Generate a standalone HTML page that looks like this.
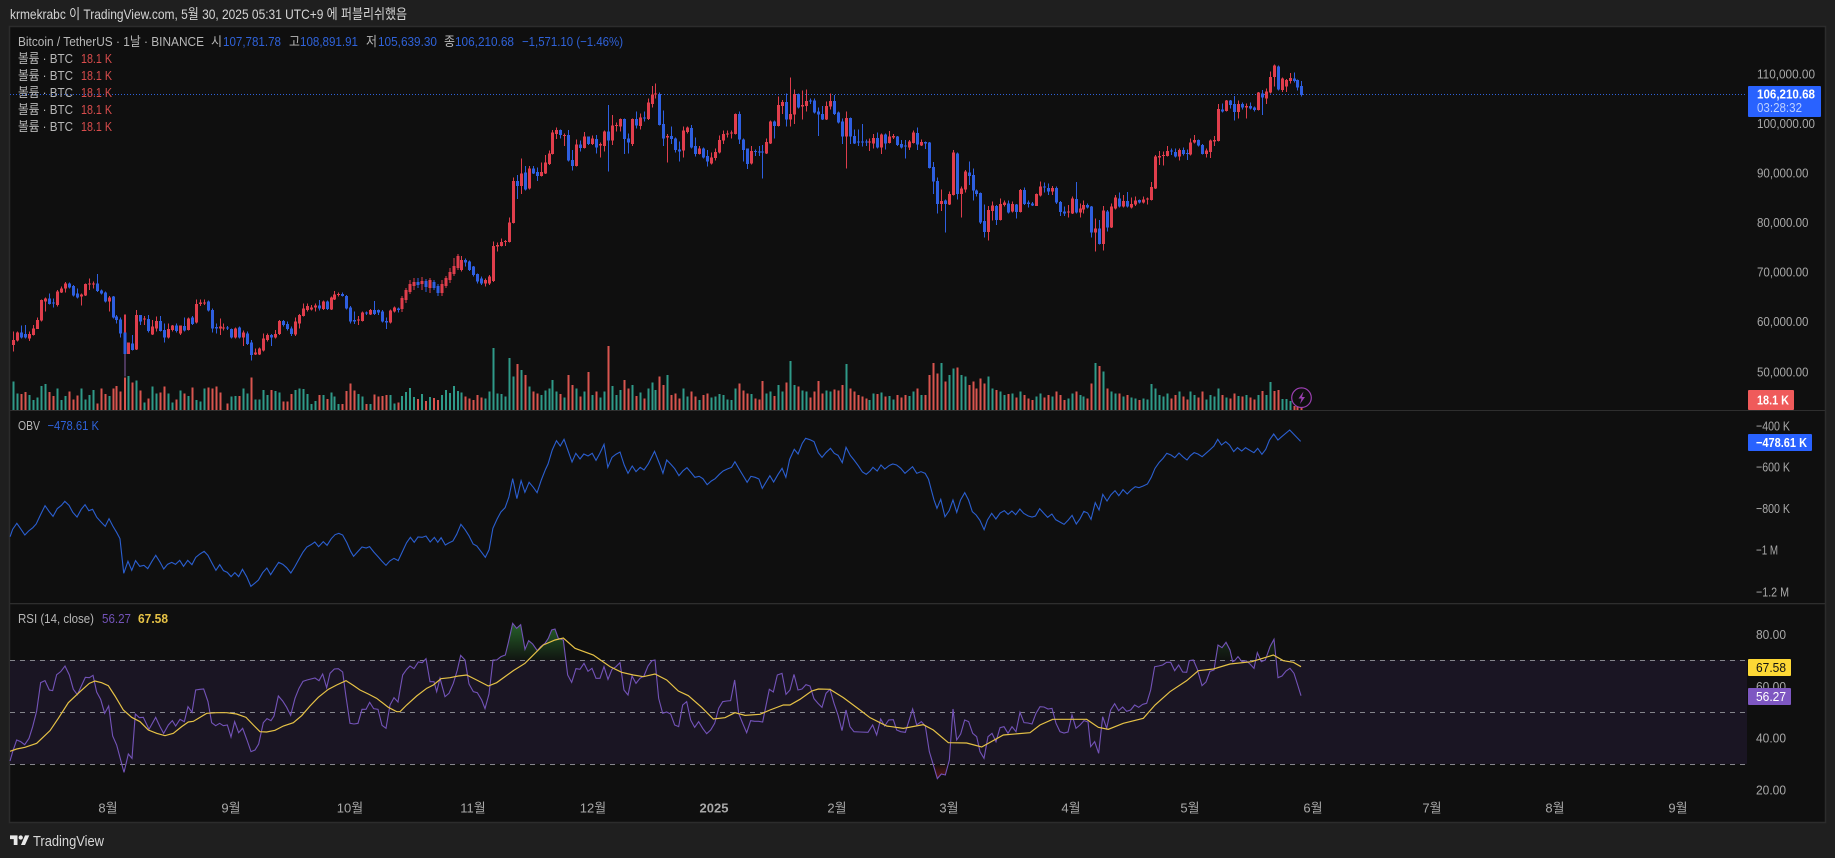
<!DOCTYPE html>
<html lang="ko"><head><meta charset="utf-8"><title>BTC chart</title>
<style>
html,body{margin:0;padding:0;background:#1f1f1f;width:1835px;height:858px;overflow:hidden}
svg{position:absolute;left:0;top:0;display:block}
text{font-family:"Liberation Sans","Noto Sans CJK KR",sans-serif;font-size:13px;fill:#b2b2b2}
.h{fill:#d4d4d4;font-size:14px}
.t{fill:#b8b8b8}
.b{fill:#2f62d9}
.r{fill:#d84c4c}
.a{fill:#a8a8a8}
.w{fill:#fff;font-weight:bold}
.vt{fill:none;stroke:#2f9a88;stroke-width:6}
.vr{fill:none;stroke:#d9554f;stroke-width:6}
.wr{fill:none;stroke:#de3d4c;stroke-width:3}
.wb{fill:none;stroke:#2e5fe0;stroke-width:3}
.br{fill:none;stroke:#e03e4c;stroke-width:9}
.bb{fill:none;stroke:#2e5fe0;stroke-width:9}
.nl{fill:none;vector-effect:non-scaling-stroke}
</style></head><body>
<svg width="1835" height="858" viewBox="0 0 1835 858" xmlns="http://www.w3.org/2000/svg">
<defs>
<linearGradient id="gg" gradientUnits="userSpaceOnUse" x1="0" y1="40" x2="0" y2="150"><stop offset="0" stop-color="#2e7d32" stop-opacity=".75"/><stop offset="1" stop-color="#2e7d32" stop-opacity=".05"/></linearGradient>
<linearGradient id="gr" gradientUnits="userSpaceOnUse" x1="0" y1="464" x2="0" y2="506"><stop offset="0" stop-color="#b71c1c" stop-opacity=".05"/><stop offset="1" stop-color="#b71c1c" stop-opacity=".5"/></linearGradient>
</defs>
<rect x="0" y="0" width="1835" height="858" fill="#1f1f1f"/>
<rect x="9.5" y="26.5" width="1816" height="796" fill="#0f0f0f" stroke="#2c2c2c" stroke-width="1.5"/>
<rect x="10" y="410" width="1815" height="1" fill="#2e2e2e"/>
<rect x="10" y="603" width="1815" height="1.3" fill="#2e2e2e"/>
<rect x="10" y="660" width="1737" height="104" fill="#1a1523"/>
<g stroke="#85858c" stroke-width="1" stroke-dasharray="5 5" fill="none"><path d="M10 660.5H1747"/><path d="M10 712.5H1747"/><path d="M10 764.5H1747"/></g>
<path d="M10 94.5H1747" stroke="#2f62d9" stroke-width="1" stroke-dasharray="1 2" fill="none"/>

<!-- volume -->
<g shape-rendering="crispEdges">
<g transform="translate(0,260) scale(.33333)">
<path class="vt" d="M40 450V365M52 450V400M88 450V405M100 450V420M112 450V412M124 450V378M136 450V372M172 450V385M184 450V420M196 450V408M244 450V385M256 450V418M268 450V405M280 450V390M328 450V408M386 450V348M410 450V362M433 450V428M457 450V380M469 450V400M505 450V400M517 450V428M541 450V392M565 450V408M589 450V420M601 450V425M613 450V385M695 450V410M707 450V408M731 450V385M743 450V400M767 450V418M779 450V418M791 450V390M803 450V405M827 450V393M838 450V397M886 450V390M898 450V385M910 450V387M922 450V402M934 450V432M946 450V423M970 450V405M994 450V397M1004 450V410M1016 450V432M1075 450V402M1087 450V410M1111 450V432M1171 450V405M1183 450V430"/>
<path class="vr" d="M64 450V402M76 450V396M148 450V396M160 450V408M208 450V394M220 450V418M232 450V406M292 450V430M304 450V385M316 450V402M340 450V385M350 450V378M362 450V395M375 450V352M398 450V368M421 450V392M445 450V415M481 450V397M493 450V380M529 450V418M553 450V400M577 450V382M625 450V382M637 450V385M649 450V380M661 450V398M683 450V430M719 450V408M755 450V352M815 450V390M850 450V425M862 450V425M874 450V402M958 450V405M982 450V417M1027 450V432M1039 450V393M1051 450V370M1063 450V392M1099 450V432M1123 450V403M1135 450V410M1147 450V408M1159 450V405M1195 450V427"/>
</g>
<g>
<path fill="none" stroke="#2f9a88" stroke-width="2" d="M402 410V396M406 410V392M410 410V388M414 410V397M422 410V394M430 410V397M442 410V395M446 410V390M450 410V393M454 410V386M458 410V391"/>
<path fill="none" stroke="#d9554f" stroke-width="2" d="M418 410V399M426 410V401M434 410V398M438 410V400"/>
</g>
<g transform="translate(460,260) scale(.33333)">
<path class="vt" d="M4 450V398M76 450V415M88 450V395M100 450V264M112 450V400M124 450V402M136 450V410M148 450V294M160 450V350M184 450V330M208 450V380M244 450V405M256 450V392M268 450V385M278 450V360M290 450V395M314 450V412M350 450V385M374 450V395M398 450V405M422 450V412M434 450V395M458 450V378M470 450V405M482 450V390M518 450V375M542 450V398M566 450V385M578 450V368M586 450V390M622 450V345M670 450V385M682 450V410M718 450V420M754 450V412M766 450V410M778 450V402M790 450V405M802 450V418M814 450V420M826 450V385M874 450V402M920 450V400M932 450V395M956 450V375M968 450V395M992 450V303M1004 450V375M1028 450V392M1040 450V395M1100 450V392M1112 450V395M1160 450V312"/>
<path class="vr" d="M16 450V410M28 450V415M40 450V420M52 450V405M64 450V412M172 450V312M196 450V345M220 450V395M232 450V400M302 450V402M326 450V345M338 450V375M362 450V410M386 450V336M410 450V395M446 450V258M494 450V360M506 450V385M530 450V408M554 450V415M598 450V350M610 450V375M634 450V405M646 450V400M658 450V415M694 450V395M706 450V410M730 450V405M742 450V400M838 450V370M850 450V392M862 450V400M886 450V415M898 450V418M908 450V363M944 450V408M980 450V368M1016 450V380M1052 450V412M1064 450V395M1076 450V363M1088 450V400M1124 450V388M1136 450V392M1148 450V375M1172 450V385M1184 450V395M1196 450V405"/>
</g>
<g transform="translate(860,260) scale(.33333)">
<path class="vt" d="M28 450V420M40 450V400M64 450V398M88 450V408M100 450V418M148 450V408M160 450V395M184 450V405M244 450V309M268 450V345M280 450V325M304 450V345M316 450V350M386 450V350M398 450V385M422 450V395M434 450V405M458 450V400M482 450V395M530 450V410M542 450V400M578 450V410M626 450V415M638 450V400M662 450V405M671 450V410M707 450V309M731 450V335M755 450V395M767 450V400M791 450V410M815 450V412M827 450V415M851 450V415M863 450V418M875 450V372M887 450V385M899 450V405M911 450V410M923 450V400M959 450V395M991 450V395M1003 450V405M1039 450V418M1051 450V405M1063 450V410M1075 450V385M1099 450V412M1135 450V408M1159 450V405M1195 450V405M1219 450V405M1231 450V366M1267 450V417M1279 450V417M1291 450V423"/>
<path class="vr" d="M8 450V410M19 450V415M52 450V402M76 450V410M112 450V405M124 450V412M136 450V405M172 450V385M196 450V405M208 450V345M220 450V309M232 450V340M256 450V365M292 450V322M328 450V375M340 450V365M350 450V385M362 450V355M374 450V370M410 450V390M446 450V402M470 450V412M494 450V405M506 450V415M518 450V420M554 450V412M566 450V405M590 450V395M602 450V405M614 450V420M650 450V395M683 450V415M695 450V370M719 450V318M743 450V385M779 450V400M803 450V405M839 450V420M935 450V415M947 450V405M971 450V410M983 450V418M1015 450V412M1027 450V395M1087 450V405M1111 450V415M1123 450V400M1147 450V410M1171 450V412M1183 450V418M1207 450V393M1243 450V393M1255 450V390M1303 450V438M1313 450V440M1325 450V442"/>
</g>
</g>

<!-- candles -->
<g shape-rendering="crispEdges">
<g transform="translate(0,260) scale(.33333)">
<path class="wr" d="M40 215V275M52 215V245M88 215V243M100 195V227M112 172V207M124 118V184M136 112V155M172 90V140M184 80V99M196 66V98M244 100V137M256 70V108M268 55V90M280 65V85M328 108V155M386 248V282M410 150V270M433 168V195M457 180V225M469 170V215M505 190V235M517 195V215M541 197V225M565 172V212M589 118V190M601 118V138M613 118V135M661 175V225M671 190V212M707 203V235M731 212V258M766 265V285M778 263V285M790 220V275M802 220V245M826 210V235M838 180V225M886 172V228M898 162V205M910 130V170M922 130V155M934 135V152M946 130V155M970 122V150M994 110V150M1004 93V120M1016 98V110M1075 168V195M1087 155V185M1111 147V165M1171 148V190M1183 140V158"/>
<path class="wb" d="M64 197V235M76 195V235M148 100V134M160 115V143M208 68V85M220 75V110M232 85V115M292 42V96M304 88V103M316 95V127M340 108V175M350 165V190M362 172V232M398 225V272M421 165V195M445 165V217M481 168V215M493 190V248M529 190V218M553 172V215M577 168V195M625 122V155M637 145V218M649 190V220M683 198V210M695 205V235M719 200V235M743 215V255M754 240V302M814 222V258M850 180V200M862 185V212M874 200V228M958 120V152M982 122V150M1027 98V110M1039 105V148M1051 138V190M1063 155V192M1099 155V165M1123 123V165M1135 148V165M1147 150V188M1159 172V207M1195 142V158"/>
<path class="br" d="M40 240V255M52 218V242M88 222V235M100 205V225M112 180V207M124 120V182M136 115V125M172 95V135M184 85V97M196 70V85M244 103V110M256 72V107M268 71V74M280 70V73M328 112V125M386 248V282M410 165V268M433 175V178M457 200V223M469 183V205M505 207V232M517 197V210M541 197V220M565 175V210M589 132V188M601 128V132M613 127V130M661 200V206M671 203V206M707 205V233M731 218V232M766 278V283M778 265V283M790 235V272M802 225V240M826 222V233M838 183V222M886 185V224M898 165V190M910 145V168M922 138V150M934 142V148M946 137V143M970 125V147M994 113V148M1004 103V118M1016 102V105M1075 178V182M1087 157V183M1111 150V163M1171 152V188M1183 143V155"/>
<path class="bb" d="M64 218V232M76 222V232M148 115V132M160 128V131M208 70V82M220 78V106M232 100V113M292 70V93M304 92V100M316 98V125M340 110V172M350 170V180M362 178V220M375 218V282M398 250V270M421 165V185M445 177V213M481 183V213M493 210V233M529 197V213M553 198V212M577 172V192M625 125V152M637 150V205M649 201V205M683 203V206M695 207V233M719 203V232M743 220V252M754 248V285M814 225V233M850 183V195M862 192V207M874 205V222M958 137V146M982 125V147M1027 102V108M1039 108V145M1051 142V185M1063 180V185M1099 157V160M1123 150V162M1135 150V158M1147 155V185M1159 183V187M1195 145V150"/>
<path d="M375 163V218" fill="none" stroke="#de3d4c" stroke-width="6"/>
<path d="M375 282V350" fill="none" stroke="#8a5fa8" stroke-width="4"/>
</g>
<g>
<path fill="none" stroke="#de3d4c" stroke-width="1" d="M402 296V312M406 288V303M410 280V294M414 278V290M422 277V290M430 278V293M442 280V296M446 276V288M450 268V283M454 258V276M458 254V270"/>
<path fill="none" stroke="#2e5fe0" stroke-width="1" d="M418 278V288M426 279V292M434 280V290M438 284V296"/>
<path fill="none" stroke="#e03e4c" stroke-width="3" d="M402 298V309M406 290V300M410 284V292M414 282V286M422 281V284M430 280V288M442 284V293M446 278V286M450 272V280M454 266V274M458 256V268"/>
<path fill="none" stroke="#2e5fe0" stroke-width="3" d="M418 282V285M426 281V287M434 282V288M438 286V293"/>
</g>
<g transform="translate(460,70) scale(.33333)">
<path class="wr" d="M4 558V605M76 625V650M88 615V645M100 515V636M112 518V545M124 505V530M136 510V528M148 442V518M160 322V460M184 265V372M208 288V358M244 278V320M256 255V312M268 242V285M278 180V254M290 172V207M314 190V228M350 208V290M374 186V236M398 196V225M422 218V262M434 182V245M458 135V225M470 158V185M482 145V185M518 145V228M542 130V178M566 85V150M578 48V112M586 40V85M622 192V278M670 170V262M682 170V190M718 228V254M754 248V283M766 235V272M778 197V250M790 182V222M802 182V202M814 182V205M826 130V194M874 228V283M920 205V252M932 152V222M956 80V170M968 90V132M992 22V170M1004 58V162M1028 62V148M1040 58V124M1100 95V150M1112 70V118M1160 125V295"/>
<path class="wb" d="M16 565V590M28 572V603M40 588V620M52 610V640M64 620V645M172 315V387M196 288V362M220 288V312M232 292V333M302 178V205M326 180V275M338 240V302M362 212V245M386 200V225M410 195V250M446 105V305M494 145V252M506 190V250M530 125V175M554 125V155M598 68V167M610 122V228M634 170V222M646 203V248M658 215V275M694 165V235M706 202V260M730 232V265M742 240V290M838 125V222M850 205V275M862 235V297M886 238V258M898 228V258M908 225V325M944 152V205M980 70V170M1016 70V115M1052 85V102M1064 85V130M1076 112V198M1088 108V150M1124 75V135M1136 125V160M1148 145V222M1172 142V222M1184 178V222M1196 178V228"/>
<path class="br" d="M4 570V600M76 630V640M88 620V640M100 528V633M112 525V530M124 516V528M136 513V516M148 457V516M160 333V459M184 310V348M208 296V356M244 306V318M256 278V310M268 250V282M278 188V252M290 180V192M314 195V198M350 224V288M374 200V234M398 206V222M422 222V226M434 185V228M458 167V212M470 165V168M482 147V170M518 147V222M542 143V168M566 98V147M578 73V102M586 71V74M622 198V203M670 182V242M682 172V186M718 235V252M754 262V280M766 246V264M778 210V248M790 192V212M802 190V194M814 187V190M826 132V192M874 243V280M920 216V250M932 155V220M956 105V168M968 96V108M992 132V148M1004 72V133M1028 105V110M1040 93V108M1100 108V148M1112 93V110M1160 144V200"/>
<path class="bb" d="M16 570V578M28 575V600M40 590V615M52 612V635M64 625V640M172 333V348M196 308V358M220 296V310M232 306V318M302 180V195M326 195V272M338 270V288M362 224V234M386 200V222M410 207V232M446 185V212M494 147V207M506 205V218M530 147V167M554 143V146M598 72V165M610 162V205M634 198V207M646 205V240M658 238V244M694 174V232M706 228V252M730 235V262M742 258V275M838 132V208M850 209V240M862 236V282M886 243V246M898 245V248M908 245V248M944 155V168M980 96V148M1016 72V112M1052 91V94M1064 92V128M1076 125V134M1088 132V148M1124 93V132M1136 128V158M1148 155V200M1172 144V200M1184 198V220M1196 215V218"/>
</g>
<g transform="translate(860,70) scale(.33333)">
<path class="wr" d="M28 205V243M40 192V235M64 190V252M88 183V220M100 192V207M148 210V240M160 182V220M184 208V228M244 358V423M268 365V405M280 240V377M304 350V442M316 300V368M386 408V512M398 395V452M422 385V452M434 392V410M458 394V428M482 357V428M530 370V408M542 335V380M578 348V375M626 405V442M638 380V432M662 400V442M671 392V430M707 445V545M731 408V542M755 400V474M767 375V418M791 375V412M815 383V415M827 380V408M851 380V400M863 382V403M875 336V392M887 255V357M899 243V285M911 245V287M923 228V260M959 235V272M991 205V256M1003 195V220M1039 235V262M1051 208V264M1063 198V228M1075 102V215M1099 90V125M1135 92V145M1159 100V145M1195 66V122M1219 55V102M1231 5V70M1243 -16V50M1267 22V66M1279 27V66M1291 9V40"/>
<path class="wb" d="M8 162V230M19 208V228M52 187V235M76 190V238M112 198V228M124 210V235M136 210V265M172 172V240M196 215V237M208 216V295M220 276V372M232 322V430M256 388V488M292 248V388M328 274V345M340 295V392M350 358V380M362 367V462M374 403V502M410 405V465M446 392V430M470 402V445M494 352V405M506 392V412M518 396V408M554 337V368M566 340V375M590 350V402M602 393V438M614 410V438M650 336V430M683 400V416M695 408V502M719 450V524M743 420V485M779 368V413M803 366V412M839 388V400M935 235V255M947 235V262M971 232V256M983 238V270M1015 208V229M1027 222V254M1087 100V127M1111 90V115M1123 78V152M1147 98V118M1171 98V118M1183 110V125M1207 60V135M1255 -13V62M1303 8V38M1313 28V62M1325 33V80"/>
<path class="br" d="M28 214V218M40 204V220M64 194V232M88 200V219M100 198V203M148 215V232M160 187V219M184 216V226M244 393V402M268 372V404M280 248V375M304 355V372M316 305V358M386 420V486M398 407V423M422 402V450M434 398V405M458 402V425M482 360V426M530 372V408M542 350V376M578 354V364M626 425V428M638 385V430M662 416V428M671 405V418M707 475V488M731 422V522M755 410V472M767 383V415M791 393V410M815 402V412M827 392V404M851 388V398M863 385V388M875 351V390M887 260V355M899 258V263M911 255V258M923 243V258M959 240V260M991 217V254M1003 210V218M1039 242V252M1051 212V246M1063 210V214M1075 117V213M1099 92V123M1135 102V126M1159 108V112M1195 68V120M1219 64V85M1231 21V68M1243 -13V21M1267 26V60M1279 30V50M1291 24V33"/>
<path class="bb" d="M8 215V218M19 215V218M52 204V232M76 194V220M112 200V225M124 222V232M136 227V230M172 189V224M196 216V220M208 218V294M220 291V335M232 333V402M256 392V402M292 250V372M328 307V318M340 315V362M350 362V372M362 369V458M374 453V486M410 408V450M446 400V428M470 403V426M494 360V402M506 398V402M518 400V407M554 349V352M566 354V364M590 354V398M602 396V426M614 424V430M650 387V428M683 405V412M695 410V488M719 475V522M743 424V472M779 385V410M803 393V410M839 390V398M935 242V245M947 246V260M971 240V252M983 249V252M1015 210V227M1027 225V252M1087 118V124M1111 92V105M1123 102V126M1147 102V112M1171 108V116M1183 113V120M1207 70V83M1255 -10V58M1303 25V33M1313 30V52M1325 48V75"/>
</g>
</g>

<!-- OBV -->
<g stroke="#2b5fd0" stroke-width="1.1">
<polyline class="nl" transform="translate(0,420) scale(.42092,.33333)" points="24,350 30,328 40,310 50,328 59,345 68,333 78,323 86,312 96,285 107,257 117,275 126,289 136,266 146,256 154,244 164,256 173,277 183,291 193,268 202,254 211,272 220,268 230,292 240,306 250,319 259,296 268,318 277,337 285,356 294,460 304,424 313,451 322,422 332,439 342,436 351,446 361,424 370,406 380,426 389,447 398,433 408,427 417,433 427,421 436,439 446,421 456,434 465,412 475,402 485,394 494,406 504,430 513,451 522,434 531,452 540,457 549,470 558,458 567,470 576,448 586,470 596,499 605,490 614,480 624,458 634,444 643,464 652,446 662,427 672,433 681,443 691,459 700,441 710,418 720,396 729,381 739,374 748,366 757,380 768,365 777,376 787,356 796,344 805,340 814,345 824,368 833,394 840,409 850,395 860,381 870,384 878,380 888,396 898,410 907,423 917,436 926,423 936,415 946,422 956,395 966,368 975,352 984,367 993,351 1003,352 1012,348 1022,366 1032,352 1040,367 1048,353 1058,375 1066,369 1076,363 1085,343 1095,313 1105,329 1114,347 1124,372 1133,378 1143,395 1153,412 1162,389 1171,325 1181,297 1190,276 1200,263 1209,231 1218,176 1228,236 1238,182 1247,217 1257,187 1267,202 1276,218 1286,180 1296,148 1302,132 1312,90 1322,62 1331,78 1340,58 1350,94 1359,126 1368,100 1378,117 1387,102 1397,108 1407,100 1416,121 1425,100 1435,73 1444,142 1454,112 1463,103 1473,96 1483,135 1492,160 1502,138 1511,155 1521,142 1530,150 1540,132 1555,94 1568,135"/>
<polyline class="nl" transform="translate(660,420) scale(.42092,.33333)" points="0,135 7,160 16,120 26,133 35,146 45,167 55,152 64,143 74,158 83,172 93,169 102,176 112,194 122,183 131,176 141,163 150,153 160,147 170,142 178,125 188,147 198,168 207,187 216,169 226,172 235,177 243,205 252,186 261,167 270,186 280,164 290,145 299,172 308,118 319,88 328,102 338,70 346,55 356,59 366,65 376,98 385,112 394,98 405,85 414,100 423,106 433,128 442,82 452,106 461,120 471,137 481,156 490,163 499,153 506,142 516,153 525,135 534,147 544,137 553,132 562,135 572,145 582,160 591,150 600,140 610,160 620,155 630,160 638,178 645,212 651,240 658,265 667,238 677,290 687,272 696,240 705,277 714,240 724,218 733,240 742,275 751,285 760,301 770,329 778,300 788,280 798,297 808,279 818,272 827,283 836,273 845,284 855,267 864,280 875,288 884,291 892,288 902,266 912,280 921,292 931,282 940,299 950,306 960,313 970,300 979,286 989,312 998,296 1007,274 1016,279 1024,298 1034,248 1043,270 1052,223 1062,243 1071,225 1081,212 1090,227 1100,209 1110,222 1119,210 1129,200 1138,203 1148,198 1158,192 1167,172 1176,145 1186,127 1195,115 1204,100 1214,105 1223,113 1233,99 1242,110 1252,120 1260,107 1269,98 1278,102 1288,110 1297,100 1306,90 1316,78 1325,58 1334,75 1344,65 1353,75 1363,95 1372,83 1382,93 1391,83 1400,90 1411,98 1420,85 1430,103 1439,88 1448,60 1458,42 1468,60 1477,50 1496,30 1522,64"/>
</g>

<!-- RSI fills -->
<g transform="translate(400,610) scale(.33333)"><polygon fill="url(#gg)" points="279,150 290,150 303,140 316,135 325,98 338,40 350,55 362,44 375,118 386,92 398,102 412,122 422,110 435,100 445,85 455,60 465,57 475,85 490,90 497,150"/></g>
<g transform="translate(860,610) scale(.33333)"><polygon fill="url(#gg)" opacity=".6" points="1065,150 1074,105 1086,113 1098,97 1110,120 1116,150"/><polygon fill="url(#gg)" opacity=".6" points="1218,150 1230,110 1242,88 1246,150"/><polygon fill="url(#gr)" points="220,464 232,506 244,492 256,495 264,464"/></g>

<!-- RSI -->
<g stroke="#7353b8" stroke-width="1.1">
<polyline class="nl" transform="translate(0,600) scale(.33333)" points="30,483 38,455 50,420 62,425 74,434 87,415 98,380 110,333 122,248 135,242 148,270 158,272 170,224 182,215 195,198 208,225 220,268 232,284 244,258 256,232 268,233 279,226 290,276 302,298 314,340 326,318 338,408 350,435 362,480 372,517 385,462 396,475 406,342 418,353 430,352 447,388 467,352 480,380 491,400 505,375 517,362 527,378 540,358 553,365 564,320 576,337 587,270 600,268 611,267 624,305 635,368 647,377 659,370 670,377 682,375 693,411 704,365 716,398 728,385 741,420 753,455 765,450 776,432 790,368 801,356 813,362 822,348 835,288 848,303 860,322 872,346 885,295 897,265 909,244 921,240 945,234 957,242 968,222 980,263 990,220 1003,207 1015,206 1028,216 1038,290 1050,370 1062,372 1074,370 1086,328 1098,328 1109,307 1121,326 1134,328 1146,376 1158,385 1170,315 1182,293 1194,306 1200,270"/>
<polyline class="nl" transform="translate(400,610) scale(.33333)" points="0,240 8,195 20,178 30,168 42,176 55,156 67,158 78,146 90,215 102,215 110,245 120,205 135,260 147,250 160,220 172,180 182,136 195,150 207,222 220,245 232,248 245,270 255,296 267,252 279,150 290,150 303,140 316,135 325,98 338,40 350,55 362,44 375,118 386,92 398,102 412,122 422,110 435,100 445,85 455,60 465,57 475,85 490,90 503,195 515,217 528,176 540,178 552,160 564,184 576,175 588,205 600,205 612,170 624,208 636,178 648,170 660,158 672,240 684,255 696,198 708,220 720,205 732,198 744,168 756,152 765,150 776,265 788,310 800,306 812,312 824,345 836,350 848,285 860,275 872,330 884,352 896,335 908,355 920,371 932,360 944,340 956,295 968,275 980,273 992,272 1004,210 1016,310 1028,340 1040,368 1052,332 1064,334 1076,334 1088,336 1108,238 1120,246 1132,195 1146,190 1158,253 1170,240 1182,193 1194,240 1206,237 1218,224 1230,228 1242,266 1254,280 1266,292 1278,250 1290,238 1302,280 1314,315 1326,362 1338,300 1350,350 1362,365 1380,366"/>
<polyline class="nl" transform="translate(860,610) scale(.33333)" points="0,366 24,367 38,345 50,375 62,327 74,348 86,330 100,329 110,360 122,365 136,367 158,297 170,345 184,335 196,348 208,425 220,465 232,506 244,492 256,495 268,450 279,297 290,390 302,372 314,330 326,335 338,370 350,380 360,425 372,445 384,380 396,370 408,395 420,353 432,350 444,370 456,350 468,365 480,307 492,338 504,339 516,342 528,310 540,290 552,291 564,297 576,295 588,340 600,365 612,369 624,366 636,315 648,355 660,345 672,332 684,336 692,410 704,395 716,430 728,320 740,355 752,300 764,281 776,302 788,291 800,304 812,300 824,285 836,292 848,283 860,280 872,240 884,170 896,168 908,165 920,157 932,157 944,182 956,165 968,186 980,187 988,152 1000,150 1012,178 1026,227 1038,216 1050,184 1062,180 1074,105 1086,113 1098,97 1110,120 1118,155 1124,152 1134,140 1146,155 1158,152 1170,162 1182,175 1192,128 1204,155 1216,150 1230,110 1242,88 1254,203 1266,198 1278,183 1290,175 1302,190 1314,228 1323,257"/>
</g>
<!-- MA -->
<g stroke="#e6c246" stroke-width="1.2">
<polyline class="nl" transform="translate(0,600) scale(.33333)" points="30,454 50,447 75,442 110,430 150,392 175,355 205,308 240,275 268,250 285,243 305,248 325,257 345,288 370,330 395,352 420,365 445,390 470,400 495,407 520,400 545,380 565,366 580,364 600,352 620,340 650,338 680,338 710,342 738,352 760,375 780,395 800,396 825,391 850,378 880,368 905,347 930,318 955,292 985,268 1010,255 1038,242 1060,256 1080,270 1105,282 1130,295 1165,322 1190,335 1200,335"/>
<polyline class="nl" transform="translate(400,610) scale(.33333)" points="0,305 20,285 50,258 80,235 100,225 123,206 150,203 175,198 200,195 230,210 265,228 290,218 340,182 375,160 430,105 465,90 490,84 525,115 580,135 630,170 665,187 700,195 730,200 765,192 800,210 835,243 865,257 905,292 940,327 975,323 1005,308 1035,316 1080,313 1110,300 1150,285 1170,285 1200,268 1235,243 1255,237 1290,238 1330,263 1380,300"/>
<polyline class="nl" transform="translate(860,610) scale(.33333)" points="0,300 30,323 80,348 130,355 190,344 220,360 265,398 320,399 365,411 430,375 510,368 540,345 578,328 680,328 715,352 745,358 790,340 850,325 885,285 930,245 980,212 1015,182 1060,177 1110,162 1175,155 1240,135 1270,152 1300,157 1323,170"/>
</g>

<text class="h" x="10" y="19" textLength="397" lengthAdjust="spacingAndGlyphs">krmekrabc 이 TradingView.com, 5월 30, 2025 05:31 UTC+9 에 퍼블리쉬했음</text>
<text class="t" x="18" y="46" textLength="186" lengthAdjust="spacingAndGlyphs">Bitcoin / TetherUS · 1날 · BINANCE</text>
<text class="t" x="211" y="46" textLength="11" lengthAdjust="spacingAndGlyphs">시</text>
<text class="b" x="223" y="46" textLength="58" lengthAdjust="spacingAndGlyphs">107,781.78</text>
<text class="t" x="289" y="46" textLength="11" lengthAdjust="spacingAndGlyphs">고</text>
<text class="b" x="300" y="46" textLength="58" lengthAdjust="spacingAndGlyphs">108,891.91</text>
<text class="t" x="366" y="46" textLength="11" lengthAdjust="spacingAndGlyphs">저</text>
<text class="b" x="378" y="46" textLength="59" lengthAdjust="spacingAndGlyphs">105,639.30</text>
<text class="t" x="444" y="46" textLength="11" lengthAdjust="spacingAndGlyphs">종</text>
<text class="b" x="455" y="46" textLength="59" lengthAdjust="spacingAndGlyphs">106,210.68</text>
<text class="b" x="522" y="46" textLength="101" lengthAdjust="spacingAndGlyphs">−1,571.10 (−1.46%)</text>
<text class="t" x="18" y="63" textLength="55" lengthAdjust="spacingAndGlyphs">볼륨 · BTC</text><text class="r" x="81" y="63" textLength="31" lengthAdjust="spacingAndGlyphs">18.1 K</text>
<text class="t" x="18" y="80" textLength="55" lengthAdjust="spacingAndGlyphs">볼륨 · BTC</text><text class="r" x="81" y="80" textLength="31" lengthAdjust="spacingAndGlyphs">18.1 K</text>
<text class="t" x="18" y="97" textLength="55" lengthAdjust="spacingAndGlyphs">볼륨 · BTC</text><text class="r" x="81" y="97" textLength="31" lengthAdjust="spacingAndGlyphs">18.1 K</text>
<text class="t" x="18" y="114" textLength="55" lengthAdjust="spacingAndGlyphs">볼륨 · BTC</text><text class="r" x="81" y="114" textLength="31" lengthAdjust="spacingAndGlyphs">18.1 K</text>
<text class="t" x="18" y="131" textLength="55" lengthAdjust="spacingAndGlyphs">볼륨 · BTC</text><text class="r" x="81" y="131" textLength="31" lengthAdjust="spacingAndGlyphs">18.1 K</text>
<text class="t" x="18" y="430" textLength="22" lengthAdjust="spacingAndGlyphs">OBV</text><text class="b" x="47.5" y="430" textLength="51.5" lengthAdjust="spacingAndGlyphs">−478.61 K</text>
<text class="t" x="18" y="623" textLength="76" lengthAdjust="spacingAndGlyphs">RSI (14, close)</text>
<text x="102" y="623" textLength="29" lengthAdjust="spacingAndGlyphs" style="fill:#7353b8">56.27</text>
<text x="138" y="623" textLength="30" lengthAdjust="spacingAndGlyphs" style="fill:#e6c246;font-weight:bold">67.58</text>
<g>
<text class="a" x="1757" y="78.5" textLength="58" lengthAdjust="spacingAndGlyphs">110,000.00</text>
<text class="a" x="1757" y="128" textLength="58" lengthAdjust="spacingAndGlyphs">100,000.00</text>
<text class="a" x="1757" y="177.5" textLength="51.5" lengthAdjust="spacingAndGlyphs">90,000.00</text>
<text class="a" x="1757" y="227" textLength="51.5" lengthAdjust="spacingAndGlyphs">80,000.00</text>
<text class="a" x="1757" y="276.5" textLength="51.5" lengthAdjust="spacingAndGlyphs">70,000.00</text>
<text class="a" x="1757" y="326" textLength="51.5" lengthAdjust="spacingAndGlyphs">60,000.00</text>
<text class="a" x="1757" y="376.5" textLength="51.5" lengthAdjust="spacingAndGlyphs">50,000.00</text>
<text class="a" x="1756" y="430.5" textLength="34" lengthAdjust="spacingAndGlyphs">−400 K</text>
<text class="a" x="1756" y="471.5" textLength="34" lengthAdjust="spacingAndGlyphs">−600 K</text>
<text class="a" x="1756" y="513" textLength="34" lengthAdjust="spacingAndGlyphs">−800 K</text>
<text class="a" x="1756" y="554.5" textLength="22" lengthAdjust="spacingAndGlyphs">−1 M</text>
<text class="a" x="1756" y="596.5" textLength="33" lengthAdjust="spacingAndGlyphs">−1.2 M</text>
<text class="a" x="1756" y="639" textLength="30" lengthAdjust="spacingAndGlyphs">80.00</text>
<text class="a" x="1756" y="691" textLength="30" lengthAdjust="spacingAndGlyphs">60.00</text>
<text class="a" x="1756" y="742.5" textLength="30" lengthAdjust="spacingAndGlyphs">40.00</text>
<text class="a" x="1756" y="794.5" textLength="30" lengthAdjust="spacingAndGlyphs">20.00</text>
</g>
<rect x="1748" y="86" width="73" height="31" rx="1" fill="#2962ff"/>
<text class="w" x="1757" y="98.5" textLength="58" lengthAdjust="spacingAndGlyphs">106,210.68</text>
<text x="1757" y="112" textLength="45" lengthAdjust="spacingAndGlyphs" style="fill:#bcd0ff">03:28:32</text>
<rect x="1748" y="390" width="46" height="20" rx="1" fill="#ef5a5a"/>
<text class="w" x="1757" y="404.5" textLength="32" lengthAdjust="spacingAndGlyphs">18.1 K</text>
<rect x="1748" y="434" width="64" height="17" rx="1" fill="#2962ff"/>
<text class="w" x="1756" y="447" textLength="51" lengthAdjust="spacingAndGlyphs">−478.61 K</text>
<rect x="1748" y="659" width="43" height="17" rx="1" fill="#fdd835"/>
<text x="1756" y="672" textLength="30" lengthAdjust="spacingAndGlyphs" style="fill:#131313">67.58</text>
<rect x="1748" y="688" width="43" height="17" rx="1" fill="#7e57c2"/>
<text x="1756" y="701" textLength="30" lengthAdjust="spacingAndGlyphs" style="fill:#fff">56.27</text>
<g text-anchor="middle">
<text class="a" x="108" y="812.5">8월</text>
<text class="a" x="231" y="812.5">9월</text>
<text class="a" x="350" y="812.5">10월</text>
<text class="a" x="473" y="812.5">11월</text>
<text class="a" x="593" y="812.5">12월</text>
<text class="a" x="714" y="812.5" style="font-weight:bold">2025</text>
<text class="a" x="837" y="812.5">2월</text>
<text class="a" x="949" y="812.5">3월</text>
<text class="a" x="1071" y="812.5">4월</text>
<text class="a" x="1190" y="812.5">5월</text>
<text class="a" x="1313" y="812.5">6월</text>
<text class="a" x="1432" y="812.5">7월</text>
<text class="a" x="1555" y="812.5">8월</text>
<text class="a" x="1678" y="812.5">9월</text>
</g>
<circle cx="1301.5" cy="397.7" r="9.8" fill="#0f0f0f" stroke="#9a3fb0" stroke-width="1.2"/>
<path d="M1303.5 391.5l-5 7h3l-1.5 5.5 5-7h-3z" fill="#9a3fb0"/>
<g transform="translate(10,835) scale(.536)" fill="#e8e8e8"><path d="M14 18.7H7V7.7H0V.7h14z"/><circle cx="20" cy="4.7" r="4"/><path d="M28 18.7h-7.5L28 .7h8z"/></g>
<text x="33" y="846" textLength="71" lengthAdjust="spacingAndGlyphs" style="fill:#d8d8d8;font-size:15px">TradingView</text>
</svg>
</body></html>
